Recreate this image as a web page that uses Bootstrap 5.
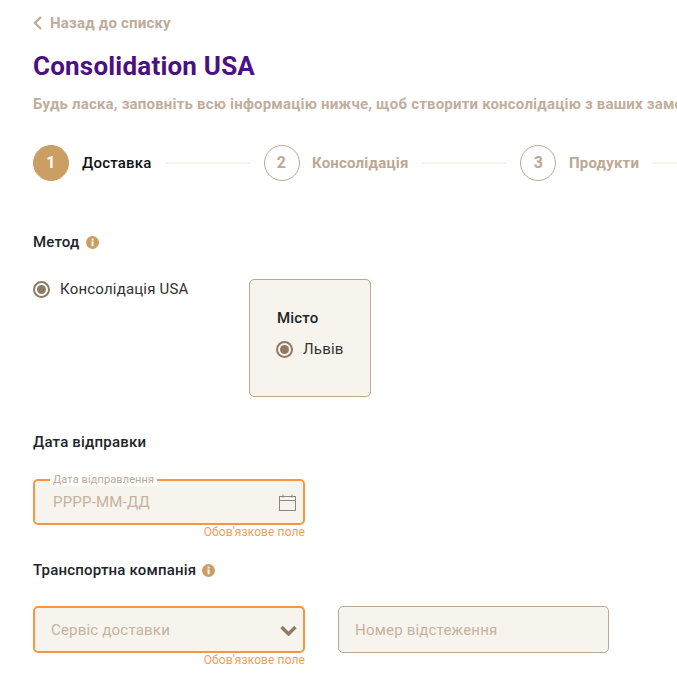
<!DOCTYPE html>
<html lang="uk">
<head>
    <meta charset="UTF-8">
    <meta name="viewport" content="width=device-width, initial-scale=1.0">
    <title>Consolidation USA</title>
    <link href="https://cdn.jsdelivr.net/npm/bootstrap@5.3.2/dist/css/bootstrap.min.css" rel="stylesheet">
    <style>
        html, body {
            overflow: hidden;
        }
        body {
            font-family: Roboto, "Liberation Sans", sans-serif;
            letter-spacing: .2px;
            background: #fff;
            color: #212529;
            height: 699px;
        }
        .page-wrap {
            width: 677px;
            padding: 14px 0 0 33px;
            overflow: hidden;
        }
        .back-link {
            color: #bfab99;
            font-size: 15px;
            font-weight: 700;
            line-height: 18px;
            text-decoration: none;
            gap: 8px;
        }
        .page-title {
            color: #4b1184;
            font-size: 26px;
            font-weight: 700;
            line-height: 32px;
            margin: 18px 0 0;
        }
        .page-sub {
            color: #c2ae9c;
            font-size: 15px;
            font-weight: 700;
            line-height: 18px;
            margin: 13px 0 0;
            white-space: nowrap;
        }
        .stepper {
            margin-top: 32px;
            height: 36px;
        }
        .step-num {
            width: 36px;
            height: 36px;
            border-radius: 50%;
            border: 1px solid #bda893;
            color: #bda893;
            font-size: 16px;
            font-weight: 700;
            flex: none;
        }
        .step-num.is-on {
            background: #cb9e64;
            border-color: #cb9e64;
            color: #fff;
        }
        .step-text {
            color: #bda893;
            font-size: 15px;
            font-weight: 700;
            margin-left: 12.500px;
            white-space: nowrap;
        }
        .step-text.is-on {
            color: #111;
            font-weight: 500;
            margin-left: 13px;
        }
        .step-line {
            width: 86px;
            height: 2px;
            background: #f9f4ee;
            margin: 0 13px;
            flex: none;
        }
        .sec-title {
            font-size: 15px;
            font-weight: 500;
            line-height: 18px;
            color: #212529;
            gap: 6px;
        }
        .info-ic {
            width: 13px;
            height: 13px;
            flex: none;
        }
        .radio-ic {
            width: 17px;
            height: 17px;
            flex: none;
        }
        .radio-row {
            font-size: 15px;
            line-height: 18px;
            gap: 10px;
            color: #333;
            white-space: nowrap;
        }
        .method-row {
            margin-top: 28px;
        }
        .method-pick {
            width: 155px;
            margin-top: 1px;
        }
        .city-box {
            width: 122px;
            height: 118px;
            margin-left: 61px;
            padding: 29px 0 0 26px;
            background: #f7f4ed;
            border: 1px solid #bda893;
            border-radius: 5px;
        }
        .city-title {
            font-size: 15px;
            font-weight: 500;
            line-height: 18px;
            margin: 0 0 13px 1px;
        }
        .fake-field {
            width: 272px;
            height: 47px;
            background: #f7f4ed;
            border: 2px solid #f29748;
            border-radius: 5px;
            color: #c4b3a2;
            font-size: 15px;
        }
        .date-field {
            padding: 0 7px 0 18px;
            margin-top: 28px;
            height: 46px;
        }
        .float-label {
            position: absolute;
            left: 15px;
            top: -7px;
            padding: 0 3px;
            background: #fff;
            color: #bda893;
            font-size: 11px;
            line-height: 12px;
            letter-spacing: .1px;
        }
        .select-field {
            padding: 1px 6px 0 16px;
        }
        .plain-field {
            width: 271px;
            height: 47px;
            padding: 1px 16px 0;
            margin-left: 33px;
            background: #f7f4ed;
            border: 1px solid #bda893;
            border-radius: 5px;
            color: #c4b3a2;
            font-size: 15px;
        }
        .err-text {
            width: 272px;
            color: #f29d57;
            font-size: 12px;
            line-height: 14px;
            letter-spacing: .1px;
            text-align: right;
        }
        .sec-method {
            margin-top: 52px;
        }
        .sec-date {
            margin-top: 36px;
        }
        .sec-carrier {
            margin-top: 22px;
        }
        .carrier-row {
            margin-top: 27px;
        }
    </style>
</head>
<body>
    <div class="page-wrap">
        <a href="#" class="back-link d-flex align-items-center">
            <svg width="9" height="14" viewBox="0 0 9 14"><path d="M8 1 2 7l6 6" fill="none" stroke="#bfab99" stroke-width="2.400"/></svg>
            <span>Назад до списку</span>
        </a>
        <h1 class="page-title">Consolidation USA</h1>
        <p class="page-sub">Будь ласка, заповніть всю інформацію нижче, щоб створити консолідацію з ваших замовлень</p>

        <!-- Stepper -->
        <div class="stepper d-flex align-items-center">
            <span class="step-num is-on d-flex align-items-center justify-content-center">1</span>
            <span class="step-text is-on">Доставка</span>
            <span class="step-line"></span>
            <span class="step-num d-flex align-items-center justify-content-center">2</span>
            <span class="step-text">Консолідація</span>
            <span class="step-line"></span>
            <span class="step-num d-flex align-items-center justify-content-center">3</span>
            <span class="step-text">Продукти</span>
            <span class="step-line"></span>
        </div>

        <!-- Method -->
        <div class="sec-title sec-method d-flex align-items-center">
            Метод
            <svg class="info-ic" viewBox="0 0 13 13"><circle cx="6.500" cy="6.500" r="6.500" fill="#cb9e64"/><rect x="5.600" y="5.400" width="1.900" height="4.800" fill="#fff"/><rect x="5.600" y="2.700" width="1.900" height="1.800" fill="#fff"/></svg>
        </div>
        <div class="method-row d-flex align-items-start">
            <div class="radio-row method-pick d-flex align-items-center">
                <svg class="radio-ic" viewBox="0 0 17 17"><circle cx="8.500" cy="8.500" r="7.500" fill="none" stroke="#8f7a63" stroke-width="2"/><circle cx="8.500" cy="8.500" r="4.500" fill="#8f7a63"/></svg>
                <span>Консолідація USA</span>
            </div>
            <div class="city-box">
                <div class="city-title">Місто</div>
                <div class="radio-row d-flex align-items-center">
                    <svg class="radio-ic" viewBox="0 0 17 17"><circle cx="8.500" cy="8.500" r="7.500" fill="none" stroke="#8f7a63" stroke-width="2"/><circle cx="8.500" cy="8.500" r="4.500" fill="#8f7a63"/></svg>
                    <span>Львів</span>
                </div>
            </div>
        </div>

        <!-- Date -->
        <div class="sec-title sec-date">Дата відправки</div>
        <div class="fake-field date-field position-relative d-flex align-items-center justify-content-between">
            <span class="float-label">Дата відправлення</span>
            <span>РРРР-ММ-ДД</span>
            <svg width="17" height="17" viewBox="0 0 17 17"><rect x=".5" y="2.500" width="16" height="14" fill="none" stroke="#8f8578"/><path d="M.5 6.500h16M4 .5v3M13 .5v3" fill="none" stroke="#8f8578"/></svg>
        </div>
        <div class="err-text">Обов'язкове поле</div>

        <!-- Carrier -->
        <div class="sec-title sec-carrier d-flex align-items-center">
            Транспортна компанія
            <svg class="info-ic" viewBox="0 0 13 13"><circle cx="6.500" cy="6.500" r="6.500" fill="#cb9e64"/><rect x="5.600" y="5.400" width="1.900" height="4.800" fill="#fff"/><rect x="5.600" y="2.700" width="1.900" height="1.800" fill="#fff"/></svg>
        </div>
        <div class="carrier-row d-flex">
            <div>
                <div class="fake-field select-field d-flex align-items-center justify-content-between">
                    <span>Сервіс доставки</span>
                    <svg width="17" height="11" viewBox="0 0 17 11"><path d="M1.500 2 8.500 9l7-7" fill="none" stroke="#8f7a63" stroke-width="3.400"/></svg>
                </div>
                <div class="err-text">Обов'язкове поле</div>
            </div>
            <div class="plain-field d-flex align-items-center">Номер відстеження</div>
        </div>
    </div>

    <script src="https://cdn.jsdelivr.net/npm/bootstrap@5.3.2/dist/js/bootstrap.bundle.min.js"></script>
</body>
</html>
